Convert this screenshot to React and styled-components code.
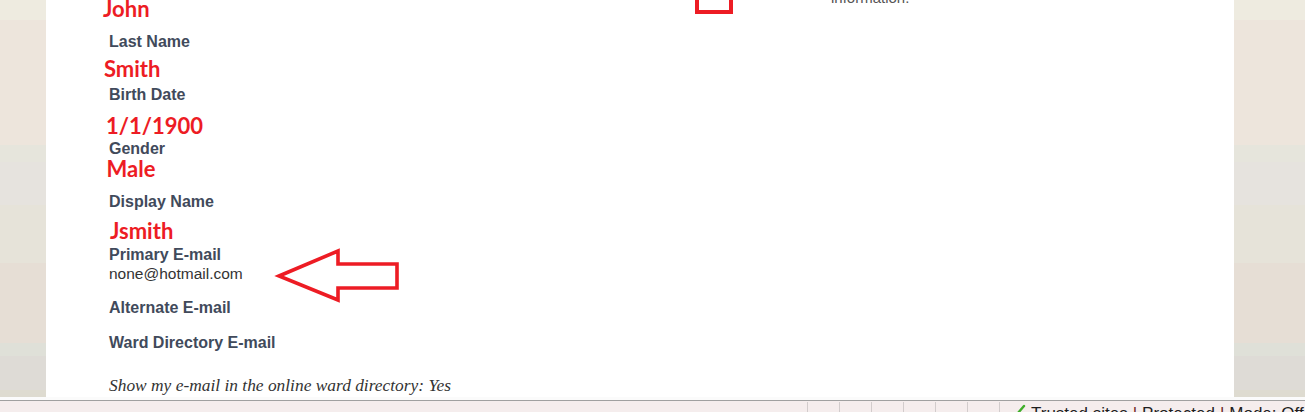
import React from "react";
import styled, { createGlobalStyle } from "styled-components";

const GlobalStyle = createGlobalStyle`
  html, body {
    margin: 0;
    padding: 0;
    width: 1305px;
    height: 412px;
    overflow: hidden;
    background: #ffffff;
  }
`;

const Page = styled.div`
  width: 1305px;
  height: 412px;
  display: flex;
  flex-direction: column;
  overflow: hidden;
`;

const Viewport = styled.div`
  display: flex;
  height: 397px;
  flex: none;
  overflow: hidden;
`;

const Gutter = styled.div`
  width: ${(p) => p.$w}px;
  flex: none;
  background: linear-gradient(
    to bottom,
    #eeebe0 0px, #eeebe0 20px,
    #ede5dc 20px, #ede5dc 145px,
    #e6e5dc 145px, #e6e5dc 162px,
    #e6e3de 162px, #e6e3de 205px,
    #e6e3d9 205px, #e6e3d9 263px,
    #e6ded5 263px, #e6ded5 343px,
    #dfe0d8 343px, #dfe0d8 356px,
    #dedbd6 356px, #dedbd6 390px,
    #dedbd0 390px, #dedbd0 397px
  );
`;

const Sheet = styled.div`
  position: relative;
  width: 1188px;
  flex: none;
  background: #ffffff;
  display: flex;
  overflow: hidden;
`;

const FieldColumn = styled.div`
  width: 785px;
  flex: none;
  box-sizing: border-box;
  padding-left: 63px;
  display: flex;
  flex-direction: column;
  align-items: flex-start;
`;

const Label = styled.div`
  font-family: Arial, "Liberation Sans", sans-serif;
  font-weight: 700;
  font-size: 16px;
  line-height: 20px;
  height: 20px;
  color: #414a5b;
  margin-top: ${(p) => p.$gap}px;
  white-space: nowrap;
`;

const Value = styled.div`
  font-family: Lato, "Open Sans", sans-serif;
  font-weight: 700;
  font-size: 22px;
  line-height: 26px;
  height: 26px;
  color: #ed1c24;
  margin-top: ${(p) => p.$gap}px;
  margin-left: ${(p) => p.$indent}px;
  white-space: nowrap;
`;

const Email = styled.div`
  font-family: Arial, "Liberation Sans", sans-serif;
  font-size: 15.5px;
  line-height: 20px;
  height: 20px;
  color: #333333;
  margin-top: ${(p) => p.$gap}px;
  white-space: nowrap;
`;

const Note = styled.div`
  font-family: "Liberation Serif", "Times New Roman", serif;
  font-style: italic;
  font-size: 17.4px;
  line-height: 22px;
  color: #333333;
  margin-top: ${(p) => p.$gap}px;
  white-space: nowrap;
`;

const SideColumn = styled.div`
  flex: 1;
`;

const SideText = styled.p`
  margin: -11px 0 0 0;
  font-family: Arial, "Liberation Sans", sans-serif;
  font-size: 15px;
  line-height: 18px;
  color: #555555;
`;

const CalloutBox = styled.div`
  position: absolute;
  left: 649px;
  top: -30px;
  width: 38px;
  height: 44px;
  box-sizing: border-box;
  border: 4px solid #ed1c24;
`;

const ArrowMark = styled.svg`
  position: absolute;
  left: 224px;
  top: 245px;
  width: 180px;
  height: 60px;
  overflow: visible;
`;

const WhiteStrip = styled.div`
  height: 3px;
  flex: none;
  background: #fbfbfb;
`;

const Rule = styled.div`
  height: 1px;
  flex: none;
  background: #a0a0a0;
`;

const StatusBar = styled.div`
  height: 11px;
  flex: none;
  display: flex;
  background: #f5eded;
  overflow: hidden;
`;

const StatusSpacer = styled.div`
  flex: 1;
`;

const StatusCell = styled.div`
  width: ${(p) => p.$w}px;
  flex: none;
  margin-top: 1px;
  border-left: 1px solid #d2cccc;
  box-sizing: border-box;
  display: flex;
  align-items: flex-start;
  overflow: hidden;
`;

const ZoneIcon = styled.svg`
  width: 12px;
  height: 12px;
  margin: 2px 0 0 14px;
  flex: none;
`;

const ZoneText = styled.span`
  margin: 3px 0 0 5px;
  font-family: "Liberation Sans", Arial, sans-serif;
  font-size: 17px;
  line-height: 18px;
  color: #1e1e1e;
  white-space: nowrap;
`;

const Sep = styled.span`
  color: #6b1f1f;
  margin: 0 5px;
`;

const fields = [
  { kind: "value", text: "John", gap: -4.5, indent: -6 },
  { kind: "label", text: "Last Name", gap: 10 },
  { kind: "value", text: "Smith", gap: 4, indent: -5 },
  { kind: "label", text: "Birth Date", gap: 3 },
  { kind: "value", text: "1/1/1900", gap: 8, indent: -3 },
  { kind: "label", text: "Gender", gap: 0 },
  { kind: "value", text: "Male", gap: -3, indent: -2.5 },
  { kind: "label", text: "Display Name", gap: 10 },
  { kind: "value", text: "Jsmith", gap: 6, indent: 1 },
  { kind: "label", text: "Primary E-mail", gap: 1 },
  { kind: "email", text: "none@hotmail.com", gap: -1 },
  { kind: "label", text: "Alternate E-mail", gap: 14 },
  { kind: "label", text: "Ward Directory E-mail", gap: 15 },
  { kind: "note", text: "Show my e-mail in the online ward directory: Yes", gap: 21 },
];

function Field({ f }) {
  if (f.kind === "value")
    return (
      <Value $gap={f.gap} $indent={f.indent}>
        {f.text}
      </Value>
    );
  if (f.kind === "email") return <Email $gap={f.gap}>{f.text}</Email>;
  if (f.kind === "note") return <Note $gap={f.gap}>{f.text}</Note>;
  return <Label $gap={f.gap}>{f.text}</Label>;
}

export default function App() {
  return (
    <Page>
      <GlobalStyle />
      <Viewport>
        <Gutter $w={46} />
        <Sheet>
          <FieldColumn>
            {fields.map((f, i) => (
              <Field key={i} f={f} />
            ))}
          </FieldColumn>
          <SideColumn>
            <SideText>information.</SideText>
          </SideColumn>
          <CalloutBox />
          <ArrowMark viewBox="0 0 180 60">
            <polygon
              points="9,31 68,6 68,19 127,19 127,43 68,43 68,55"
              fill="none"
              stroke="#ed1c24"
              strokeWidth="3.6"
              strokeLinejoin="miter"
            />
          </ArrowMark>
        </Sheet>
        <Gutter $w={71} />
      </Viewport>
      <WhiteStrip />
      <Rule />
      <StatusBar>
        <StatusSpacer />
        {[0, 1, 2, 3, 4, 5].map((i) => (
          <StatusCell key={i} $w={32} />
        ))}
        <StatusCell $w={306}>
          <ZoneIcon viewBox="0 0 12 12">
            <path d="M2 12 L4 9 L10 2" fill="none" stroke="#3fae2a" strokeWidth="2.4" strokeLinecap="round" />
          </ZoneIcon>
          <ZoneText>
            Trusted sites<Sep>|</Sep>Protected<Sep>|</Sep>Mode: Off
          </ZoneText>
        </StatusCell>
      </StatusBar>
    </Page>
  );
}
